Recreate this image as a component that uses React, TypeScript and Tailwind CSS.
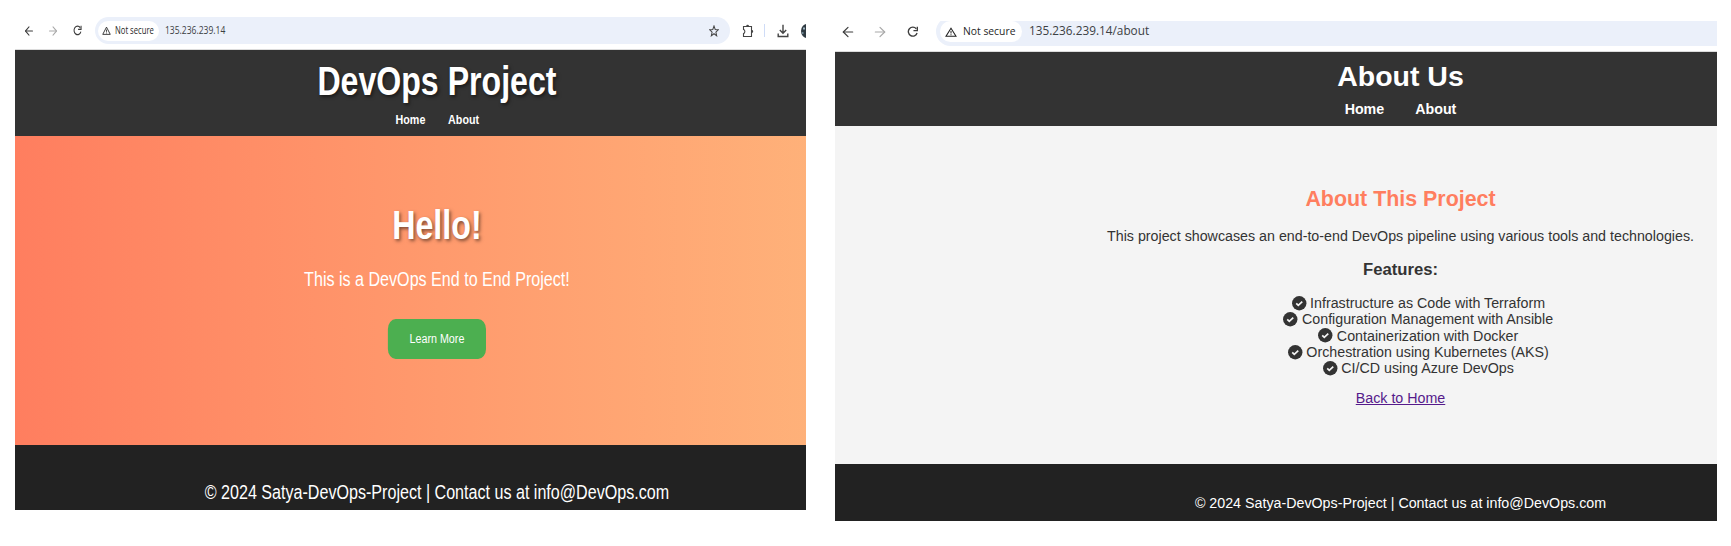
import type { ReactNode } from "react";
import { ArrowLeft, ArrowRight } from "lucide-react";

const sans = "font-['Liberation_Sans',Arial,sans-serif]";
const ui = "font-['Open_Sans','Noto_Sans',sans-serif]";

const features = [
  "Infrastructure as Code with Terraform",
  "Configuration Management with Ansible",
  "Containerization with Docker",
  "Orchestration using Kubernetes (AKS)",
  "CI/CD using Azure DevOps",
];

function Reload({ className }: { className: string }) {
  return (
    <svg viewBox="0 0 24 24" preserveAspectRatio="none" className={className} fill="none" stroke="currentColor" strokeWidth="2.8">
      <path d="M21 14.5A9.3 9.3 0 1 1 19.4 6" />
      <path d="M21.5 1.5v8h-8" />
    </svg>
  );
}

function Warning({ className }: { className: string }) {
  return (
    <svg viewBox="0 0 24 20" preserveAspectRatio="none" className={className} fill="none" stroke="currentColor">
      <path d="M12 2.5 22 18.6H2Z" strokeWidth="2.1" />
      <path d="M12 8v5M12 14.5v2" strokeWidth="2" />
    </svg>
  );
}

function Check() {
  return (
    <svg viewBox="0 0 24 24" className="size-[14.5px] shrink-0 overflow-visible">
      <circle cx="12" cy="12" r="11.9" fill="#333" />
      <path d="m7 12.3 3.4 3.3 6.6-6.4" fill="none" stroke="#f4f4f4" strokeWidth="2.8" />
    </svg>
  );
}

function Nav({ className }: { className: string }) {
  return (
    <nav className={className}>
      <a>Home</a>
      <a>About</a>
    </nav>
  );
}

function Footer({ className, children }: { className: string; children: ReactNode }) {
  return <footer className={className}>{children}</footer>;
}

function HomeWindow() {
  return (
    <section className="mt-[17px] h-[493px] w-[791px] shrink-0 overflow-hidden">
      <div className="flex h-[33px] items-start border-b border-[#dcdcdc]">
        <div className="flex h-[27px] w-[80px] shrink-0 items-center text-[#3c3c3c]">
          <ArrowLeft preserveAspectRatio="none" className="ml-[8px] h-[14px] w-[12px]" strokeWidth={2} />
          <ArrowRight preserveAspectRatio="none" className="ml-[12px] h-[14px] w-[12px] text-[#a8a8a8]" strokeWidth={2} />
          <Reload className="ml-[14px] h-[11px] w-[9px]" />
        </div>
        <div className="flex h-[27px] w-[635px] shrink-0 items-center rounded-full bg-[#ebf0fa] pl-[3px]">
          <div className="flex h-5 w-[61px] items-center rounded-full bg-white pl-[4px]">
            <Warning className="h-[9px] w-[9px] shrink-0 text-[#222]" />
            <span className={`${ui} ml-[4px] w-[39px] origin-left scale-x-[0.73] text-[10.5px] font-medium whitespace-nowrap text-[#1f1f1f]`}>Not secure</span>
          </div>
          <span className={`${ui} ml-[6px] origin-left scale-x-[0.775] text-[11px] text-[#3c4043]`}>135.236.239.14</span>
          <svg viewBox="0 0 24 24" preserveAspectRatio="none" className="mr-[11px] ml-auto h-[12px] w-[10px]" fill="none" stroke="#444" strokeWidth="2.4">
            <path d="m12 2 2.9 7 7.3.5-5.6 4.8 1.8 7.2-6.4-4-6.4 4 1.8-7.2L1.800 9.500l7.300-.5Z" />
          </svg>
        </div>
        <div className="flex h-[27px] items-center text-[#444]">
          <svg viewBox="0 0 12 14" className="ml-[12px] h-[14px] w-[12px]" fill="none" stroke="currentColor">
            <path d="M1.500 2.500H9.500V12.500H1.500V9.600C3.300 9.200 3.300 5.900 1.500 5.500Z" strokeWidth="1.100" />
            <path d="M4.200 2.200a1.400 1.400 0 0 1 2.800 0ZM9.800 6.100a1.400 1.400 0 0 1 0 2.800Z" fill="currentColor" stroke="none" />
          </svg>
          <span className="ml-[10px] h-[13px] w-px bg-[#cfdcf7]" />
          <svg viewBox="0 0 12 14" className="ml-[12px] h-[14px] w-[12px]" fill="none" stroke="currentColor" strokeWidth="1.4">
            <path d="M6 .8v8.200M2.800 6 6 9.200 9.200 6M1.200 9.500v3h9.600v-3" />
          </svg>
          <svg viewBox="0 0 12 14" className="ml-[12px] h-[14px] w-[12px] shrink-0">
            <ellipse cx="6" cy="7" rx="6" ry="7" fill="#2f3a42" />
            <path d="M2 3.500h2v2H2Z" fill="#9fb4c0" />
            <path d="M1 8h1.500v2H1Z" fill="#6f8793" />
          </svg>
        </div>
      </div>
      <div className={`${sans} w-[1075px] origin-left scale-x-[0.785] text-center text-white`}>
        <header className="h-[86px] bg-[#333] pt-2">
          <h1 className="text-[40.9px] leading-[47px] font-bold [text-shadow:2px_2px_4px_rgba(0,0,0,0.5)]">DevOps Project</h1>
          <Nav className="mt-[7px] flex justify-center gap-[29px] pl-px text-[13.67px] leading-4 font-bold" />
        </header>
        <main className="flex h-[309px] flex-col items-center bg-linear-to-r from-[#ff7e5f] to-[#feb47b] pt-[66px]">
          <h2 className="text-[41px] leading-[47px] font-bold [text-shadow:2px_2px_4px_rgba(0,0,0,0.5)]">Hello!</h2>
          <p className="mt-[18px] text-[20.5px] leading-6">This is a DevOps End to End Project!</p>
          <a className="mt-7 h-10 w-[125px] rounded-[10px] bg-[#4caf50] pt-3 text-[13.67px] leading-4">Learn More</a>
        </main>
        <Footer className="h-[65px] bg-[#222] pt-[35px] text-[20.5px] leading-6">© 2024 Satya-DevOps-Project | Contact us at info@DevOps.com</Footer>
      </div>
    </section>
  );
}

function AboutWindow() {
  return (
    <section className="mt-[21px] ml-[29px] h-[500px] w-[882px] shrink-0 overflow-hidden">
      <div className="flex h-[31px] items-start border-b border-[#dcdcdc]">
        <div className="flex h-[21px] w-[101px] shrink-0 items-center text-[#3c3c3c]">
          <ArrowLeft className="ml-[5px] size-4" strokeWidth={1.8} />
          <ArrowRight className="ml-[16px] size-4 text-[#a8a8a8]" strokeWidth={1.8} />
          <Reload className="ml-[19px] size-[11.5px]" />
        </div>
        <div className="h-[25px] grow overflow-hidden">
          <div className="-mt-[4px] flex h-[29px] w-[900px] items-center rounded-full bg-[#ebf0fa] pb-[3px] pl-[4px]">
            <div className="mt-[3px] flex h-[21px] w-[82px] items-center rounded-full bg-white pl-[5px]">
              <Warning className="h-[10px] w-[12px] shrink-0 text-[#222]" />
              <span className={`${ui} ml-[5.5px] origin-left scale-x-[0.94] text-[11px] font-medium whitespace-nowrap text-[#1f1f1f]`}>Not secure</span>
            </div>
            <span className={`${ui} mt-[2px] ml-[7px] text-[11.8px] text-[#3c4043]`}>135.236.239.14/about</span>
          </div>
        </div>
      </div>
      <div className={`${sans} w-[1131px] text-center text-[14.26px] leading-4`}>
        <header className="h-[74px] bg-[#333] pt-2 font-bold text-white">
          <h1 className="text-[28.48px] leading-8">About Us</h1>
          <Nav className="mt-[9px] flex justify-center gap-[31px]" />
        </header>
        <main className="h-[338px] bg-[#f4f4f4] pt-[61px] text-[#333]">
          <h2 className="text-[21.4px] leading-6 font-bold text-[#ff7e5f]">About This Project</h2>
          <p className="mt-[17px]">This project showcases an end-to-end DevOps pipeline using various tools and technologies.</p>
          <h3 className="mt-[17px] text-[16.66px] leading-[18px] font-bold">Features:</h3>
          <ul className="mt-[16px] pl-[35.6px] leading-[16.25px]">
            {features.map((f) => (
              <li key={f} className="flex items-center justify-center gap-[4px]">
                <Check />
                {f}
              </li>
            ))}
          </ul>
          <a className="mt-[13.75px] inline-block text-[#551a8b] underline">Back to Home</a>
        </main>
        <Footer className="h-[57px] bg-[#222] pt-[31px] text-white">© 2024 Satya-DevOps-Project | Contact us at info@DevOps.com</Footer>
      </div>
    </section>
  );
}

export default function App() {
  return (
    <div className="flex h-[546px] w-[1731px] items-start overflow-hidden bg-white pl-[15px]">
      <HomeWindow />
      <AboutWindow />
    </div>
  );
}
